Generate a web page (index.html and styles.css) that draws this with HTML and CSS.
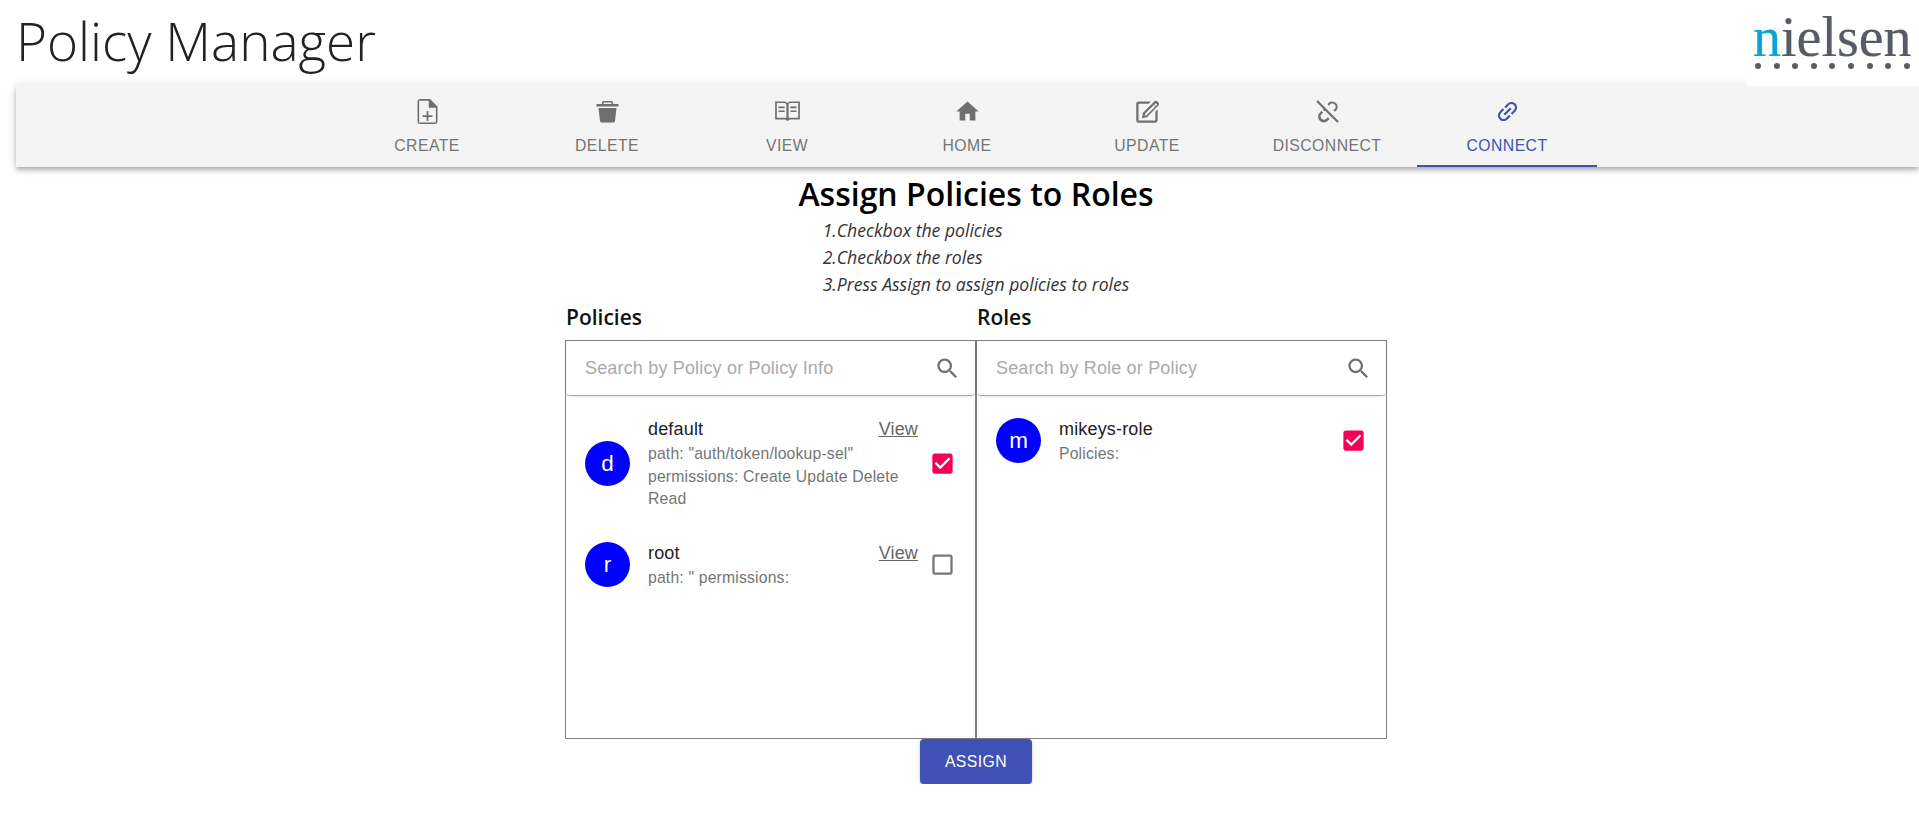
FILE: index.html
```html
<!doctype html>
<html lang="en">
    <head>
        <title>Policy Manager</title>
        <link rel="stylesheet" href="styles.css">
    </head>
    <body>
        <header class="top">
            <h1 class="app-title">Policy Manager</h1>
            <div class="logo">
                <div class="logo-word"><span class="logo-n">n</span>ielsen</div>
                <div class="logo-dots">
                    <i></i><i></i><i></i><i></i><i></i><i></i><i></i><i></i><i></i>
                </div>
            </div>
        </header>

        <nav class="tabs">
            <a class="tab">
                <svg class="tab-icon" viewBox="1.200 1.200 21.600 21.600"><path d="M12.700 11.500h-1.400V15H8v1.400h3.300v3.100h1.400v-3.100H16V15h-3.300zM14 2H6c-1.100 0-2 .9-2 2v16c0 1.100.89 2 1.990 2H18c1.100 0 2-.9 2-2V8l-6-6zm4.700 18.700H5.300V3.300H13V9h5.700z"/></svg>
                CREATE
            </a>
            <a class="tab">
                <svg class="tab-icon" viewBox="-1.500 -1.500 27 27"><path d="M8 1.500h8c.8 0 1.500.7 1.500 1.500v1.500H23V7H1V4.500h5.500V3c0-.8.7-1.500 1.500-1.500zM8 3v1.500h8V3zM3 8.500h18l-1.500 13c-.1.8-.8 1.500-1.700 1.500H6.200c-.9 0-1.600-.7-1.700-1.500z"/></svg>
                DELETE
            </a>
            <a class="tab">
                <svg class="tab-icon" viewBox="0 0 24 24"><path d="M1 3h9l2 1.500L14 3h9v16h-9l-2 1.500L10 19H1zm1.500 1.500v13H11V5.500l-1-1zm19 0H14l-1 1v12h8.500zM4 7.500h5.500V9H4zm0 3.500h5.500v1.500H4zm10.500-3.500H20V9h-5.500zm0 3.500H20v1.500h-5.500z"/></svg>
                VIEW
            </a>
            <a class="tab">
                <svg class="tab-icon" viewBox="0 0 24 24"><path d="M10 20v-6h4v6h5v-8h3L12 3 2 12h3v8z"/></svg>
                HOME
            </a>
            <a class="tab">
                <svg class="tab-icon" viewBox="0 0 24 24"><path d="M2 5c0-1.100.9-2 2-2h11l-2 2H4v15h15v-8l2-2v10c0 1.100-.9 2-2 2H4c-1.100 0-2-.9-2-2zm6 8L18 3c.8-.8 2-.8 2.800 0l.9.9c.8.8.8 2 0 2.800L11.500 17 7 18zm2 .8-.6 2 2-.6 7.600-7.600-1.400-1.400zm9-9-1 1 1.400 1.400 1-1c.2-.2.2-.5 0-.7l-.7-.7c-.2-.2-.5-.2-.7 0z"/></svg>
                UPDATE
            </a>
            <a class="tab">
                <svg class="tab-icon" viewBox="0 0 24 24"><path d="M14.400 3.300a5 5 0 0 1 6.300 6.300 5 5 0 0 1-2.100 2.600l-1.400-1.500a3 3 0 0 0 1.800-1.500 3 3 0 0 0-4-4 3 3 0 0 0-1.500 1.800l-1.500-1.400a5 5 0 0 1 2.400-2.300zM9 9.200l1.500 1.500a3 3 0 0 0-.9 1l-1.700-1a5 5 0 0 1 1.100-1.500zM6.600 11.400l1.500 1.500-1.600 1.600a3 3 0 0 0 4.200 4.200l1.600-1.600 1.500 1.500-1.600 1.600a5 5 0 0 1-7.100-7.100zM3.400 2 22 20.600 20.600 22 2 3.400z"/></svg>
                DISCONNECT
            </a>
            <a class="tab tab-active">
                <svg class="tab-icon" viewBox="0 0 24 24"><path transform="rotate(-45 12 12)" d="M3.900 12c0-1.710 1.390-3.100 3.100-3.100h4V7H7c-2.760 0-5 2.240-5 5s2.240 5 5 5h4v-1.900H7c-1.710 0-3.100-1.390-3.100-3.100zM8 13h8v-2H8v2zm9-6h-4v1.900h4c1.710 0 3.100 1.390 3.100 3.100s-1.390 3.100-3.100 3.100h-4V17h4c2.760 0 5-2.240 5-5s-2.240-5-5-5z"/></svg>
                CONNECT
            </a>
        </nav>

        <main class="content">
            <h2 class="page-title">Assign Policies to Roles</h2>
            <div class="steps">
                <div>1.Checkbox the policies</div>
                <div>2.Checkbox the roles</div>
                <div>3.Press Assign to assign policies to roles</div>
            </div>

            <div class="columns">
                <section class="column">
                    <h3 class="column-title">Policies</h3>
                    <div class="panel">
                        <div class="search">
                            <input class="search-input" type="text" placeholder="Search by Policy or Policy Info">
                            <svg class="search-icon" viewBox="0 0 24 24"><path d="M15.500 14h-.79l-.28-.27C15.410 12.590 16 11.110 16 9.500 16 5.910 13.090 3 9.500 3S3 5.910 3 9.500 5.910 16 9.500 16c1.610 0 3.090-.59 4.230-1.570l.27.28v.79l5 4.990L20.490 19l-4.990-5zm-6 0C7.010 14 5 11.990 5 9.500S7.010 5 9.500 5 14 7.010 14 9.500 11.990 14 9.500 14z"/></svg>
                        </div>
                        <ul class="list">
                            <li class="item">
                                <div class="avatar">d</div>
                                <div class="item-text">
                                    <div class="item-head"><span>default</span><a class="view-link">View</a></div>
                                    <div class="item-sub">path: "auth/token/lookup-sel"<br>permissions: Create Update Delete Read</div>
                                </div>
                                <svg class="check check-on" viewBox="0 0 24 24"><path d="M19 3H5c-1.110 0-2 .9-2 2v14c0 1.100.89 2 2 2h14c1.110 0 2-.9 2-2V5c0-1.100-.89-2-2-2zm-9 14l-5-5 1.410-1.410L10 14.170l7.590-7.590L19 8l-9 9z"/></svg>
                            </li>
                            <li class="item">
                                <div class="avatar">r</div>
                                <div class="item-text">
                                    <div class="item-head"><span>root</span><a class="view-link">View</a></div>
                                    <div class="item-sub">path: " permissions:</div>
                                </div>
                                <svg class="check" viewBox="0 0 24 24"><path d="M19 5v14H5V5h14m0-2H5c-1.100 0-2 .9-2 2v14c0 1.100.9 2 2 2h14c1.100 0 2-.9 2-2V5c0-1.100-.9-2-2-2z"/></svg>
                            </li>
                        </ul>
                    </div>
                </section>
                <section class="column">
                    <h3 class="column-title">Roles</h3>
                    <div class="panel">
                        <div class="search">
                            <input class="search-input" type="text" placeholder="Search by Role or Policy">
                            <svg class="search-icon" viewBox="0 0 24 24"><path d="M15.500 14h-.79l-.28-.27C15.410 12.590 16 11.110 16 9.500 16 5.910 13.090 3 9.500 3S3 5.910 3 9.500 5.910 16 9.500 16c1.610 0 3.090-.59 4.230-1.570l.27.28v.79l5 4.990L20.490 19l-4.990-5zm-6 0C7.010 14 5 11.990 5 9.500S7.010 5 9.500 5 14 7.010 14 9.500 11.990 14 9.500 14z"/></svg>
                        </div>
                        <ul class="list">
                            <li class="item">
                                <div class="avatar">m</div>
                                <div class="item-text">
                                    <div class="item-head"><span>mikeys-role</span></div>
                                    <div class="item-sub">Policies:</div>
                                </div>
                                <svg class="check check-on" viewBox="0 0 24 24"><path d="M19 3H5c-1.110 0-2 .9-2 2v14c0 1.100.89 2 2 2h14c1.110 0 2-.9 2-2V5c0-1.100-.89-2-2-2zm-9 14l-5-5 1.410-1.410L10 14.170l7.590-7.590L19 8l-9 9z"/></svg>
                            </li>
                        </ul>
                    </div>
                </section>
            </div>

            <button class="assign" type="button">ASSIGN</button>
        </main>
    </body>
</html>
```

FILE: styles.css
```css
body {
    margin: 0;
    background: #fff;
    font-family: "Liberation Sans", sans-serif;
    color: #212121;
    overflow: hidden;
}

/* title row */
.top {
    display: flex;
    justify-content: space-between;
    height: 85px;
}
.app-title {
    margin: 0 0 0 16px;
    font-family: "Open Sans", sans-serif;
    font-size: 53px;
    font-weight: 300;
    line-height: 82px;
    color: #222;
}
.logo {
    position: relative;
    z-index: 2;
    width: 172px;
    height: 86px;
    background: #fff;
    box-sizing: border-box;
    padding-left: 6px;
}
.logo-word {
    font-family: "Liberation Serif", serif;
    font-size: 56px;
    line-height: 56px;
    padding-top: 9px;
    color: #565b66;
    -webkit-text-stroke: 0.2px #565b66;
}
.logo-n {
    color: #0aa5d6;
    -webkit-text-stroke: 0.2px #0aa5d6;
}
.logo-dots {
    display: flex;
    gap: 12.600px;
    padding-left: 2px;
    margin-top: -2px;
}
.logo-dots i {
    width: 6px;
    height: 6px;
    border-radius: 50%;
    background: #565b66;
}

/* tabs */
.tabs {
    margin-left: 16px;
    padding-right: 1px;
    height: 82px;
    display: flex;
    justify-content: center;
    background: #f4f4f4;
    box-shadow: 0 2px 4px -1px rgba(0,0,0,.2), 0 4px 5px 0 rgba(0,0,0,.14), 0 1px 10px 0 rgba(0,0,0,.12);
}
.tab {
    width: 180px;
    box-sizing: border-box;
    padding-top: 13px;
    display: flex;
    flex-direction: column;
    align-items: center;
    gap: 10px;
    font-size: 15.750px;
    line-height: 22px;
    letter-spacing: .45px;
    color: #757575;
}
.tab-icon {
    width: 27px;
    height: 27px;
    flex: none;
    fill: #6f6f6f;
}
.tab-active {
    color: #3f51b5;
    border-bottom: 2px solid #3f51b5;
}
.tab-active .tab-icon {
    fill: #3f51b5;
}

/* page body */
.content {
    padding-left: 33px;
    display: flex;
    flex-direction: column;
    align-items: center;
}
.page-title {
    margin: 0;
    padding-top: 6px;
    font-family: "Open Sans", sans-serif;
    font-size: 32px;
    font-weight: 600;
    line-height: 42px;
    color: #000;
}
.steps {
    margin-top: 2px;
    font-family: "Open Sans", sans-serif;
    font-size: 17.600px;
    font-style: italic;
    line-height: 27px;
    color: #333;
}
.columns {
    display: flex;
}
.column {
    width: 411px;
}
.column-title {
    margin: 0;
    padding: 5px 0 9px 1px;
    font-family: "Open Sans", sans-serif;
    font-size: 21px;
    font-weight: 600;
    line-height: 28px;
    color: #111;
}
.panel {
    box-sizing: border-box;
    height: 399px;
    border: 1px solid #808080;
}
.search {
    height: 54px;
    display: flex;
    align-items: center;
    padding: 0 14px 0 19px;
    border-radius: 0 0 4px 4px;
    box-shadow: 0 2px 1px -1px rgba(0,0,0,.2), 0 1px 1px 0 rgba(0,0,0,.14), 0 1px 3px 0 rgba(0,0,0,.12);
}
.search-input {
    flex: 1;
    min-width: 0;
    border: none;
    outline: none;
    padding: 0;
    font-family: "Liberation Sans", sans-serif;
    font-size: 18px;
    letter-spacing: .17px;
    color: #333;
}
.search-input::placeholder {
    color: #aaa;
    opacity: 1;
}
.search-icon {
    width: 27px;
    height: 27px;
    flex: none;
    fill: #6f6f6f;
}
.list {
    list-style: none;
    margin: 0;
    padding: 21px 0 0;
}
.item {
    display: flex;
    align-items: center;
    padding: 0 19px 0 19px;
    margin-bottom: 29px;
}
.avatar {
    width: 45px;
    height: 45px;
    flex: none;
    border-radius: 50%;
    background: #00f;
    color: #fff;
    font-size: 22.500px;
    line-height: 45px;
    text-align: center;
    margin-right: 18px;
}
.item-text {
    flex: 1;
    min-width: 0;
}
.item-head {
    display: flex;
    justify-content: space-between;
    font-size: 18px;
    line-height: 27px;
    letter-spacing: .17px;
    color: #222;
}
.view-link {
    color: #666;
    text-decoration: underline;
}
.item-sub {
    font-size: 15.750px;
    line-height: 22.500px;
    letter-spacing: .17px;
    color: #757575;
}
.check {
    width: 27px;
    height: 27px;
    flex: none;
    margin-left: 11px;
    fill: #757575;
}
.check-on {
    fill: #f50057;
}

.assign {
    width: 112px;
    height: 45px;
    border: none;
    border-radius: 4px;
    background: #3f51b5;
    color: #fff;
    font-family: "Liberation Sans", sans-serif;
    font-size: 15.750px;
    letter-spacing: .45px;
    box-shadow: 0 3px 1px -2px rgba(0,0,0,.2), 0 2px 2px 0 rgba(0,0,0,.14), 0 1px 5px 0 rgba(0,0,0,.12);
}
```
